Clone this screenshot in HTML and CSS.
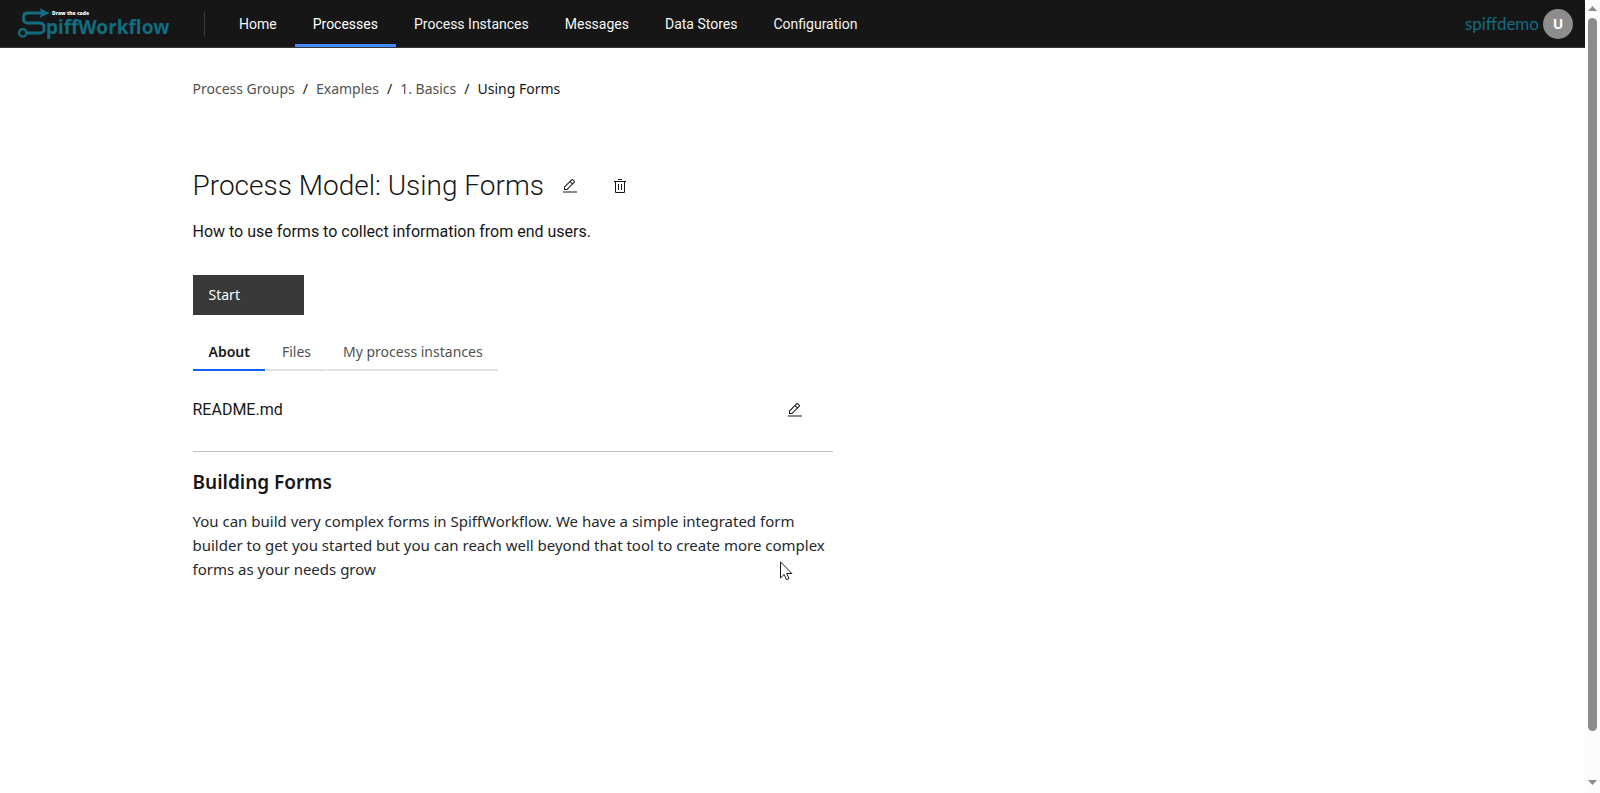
FILE: index.html
```html
<!DOCTYPE html>
<html lang="en">
<head>
<meta charset="utf-8">
<meta name="viewport" content="width=device-width, initial-scale=1">
<title>Using Forms</title>
<link rel="stylesheet" href="styles.css">
</head>
<body>
<div class="app">
  <header class="header">
    <a class="logo" href="#" aria-label="SpiffWorkflow">
      <svg width="176" height="47" viewBox="0 0 176 47" aria-hidden="true">
        <path d="M43 13H28c-3 0-4.500 1.500-4.500 4v2c0 2.500 1.500 4 4.500 4H39.500c3 0 4.500 1.500 4.500 4v2c0 2.500-1.500 4-4.500 4H27" fill="none" stroke="#126d82" stroke-width="2.800"/>
        <path d="M39.500 8 49.500 13 39.500 18 41.500 13Z" fill="#126d82"/>
        <circle cx="22.700" cy="32.800" r="3.700" fill="none" stroke="#126d82" stroke-width="2.300"/>
        <text class="logo-name" x="46" y="34">piffWorkflow</text>
        <text class="logo-tag" x="52" y="15">Draw the code</text>
      </svg>
    </a>
    <nav class="nav" aria-label="Main">
      <a class="nav-link" href="#">Home</a>
      <a class="nav-link nav-link-active" href="#" aria-current="page">Processes</a>
      <a class="nav-link" href="#">Process Instances</a>
      <a class="nav-link" href="#">Messages</a>
      <a class="nav-link" href="#">Data Stores</a>
      <a class="nav-link" href="#">Configuration</a>
    </nav>
    <div class="user">
      <a class="user-name" href="#">spiffdemo</a>
      <button class="avatar" type="button" aria-label="User menu">U</button>
    </div>
  </header>

  <main class="content">
    <nav aria-label="Breadcrumb">
      <ol class="breadcrumb">
        <li><a href="#">Process Groups</a></li>
        <li><a href="#">Examples</a></li>
        <li><a href="#">1. Basics</a></li>
        <li aria-current="page">Using Forms</li>
      </ol>
    </nav>

    <div class="title-row">
      <h1 class="title">Process Model: Using Forms</h1>
      <div class="title-actions">
        <button class="icon-button" type="button" aria-label="Edit process model">
          <svg width="16" height="16" viewBox="0 0 32 32" aria-hidden="true"><path d="M2 27H30V29H2zM25.400 9c.8-.8.8-2 0-2.800l-3.600-3.600c-.8-.8-2-.8-2.800 0l-15 15V24h6.400L25.400 9zM20.400 4 24 7.600l-3 3L17.400 7 20.400 4zM6 22v-3.600l10-10 3.600 3.600-10 10H6z"/></svg>
        </button>
        <button class="icon-button" type="button" aria-label="Delete process model">
          <svg width="16" height="16" viewBox="0 0 32 32" aria-hidden="true"><path d="M12 12H14V24H12zM18 12H20V24H18zM4 6V8H6V28a2 2 0 0 0 2 2H24a2 2 0 0 0 2-2V8h2V6zM8 28V8H24V28zM12 2H20V4H12z"/></svg>
        </button>
      </div>
    </div>
    <p class="description">How to use forms to collect information from end users.</p>
    <button class="start" type="button">Start</button>

    <div class="tabs" role="tablist" aria-label="Process model">
      <button class="tab tab-active" type="button" role="tab" aria-selected="true">About</button>
      <button class="tab" type="button" role="tab" aria-selected="false">Files</button>
      <button class="tab" type="button" role="tab" aria-selected="false">My process instances</button>
    </div>

    <section class="readme">
      <div class="readme-head">
        <span>README.md</span>
        <button class="icon-button" type="button" aria-label="Edit README.md">
          <svg width="16" height="16" viewBox="0 0 32 32" aria-hidden="true"><path d="M2 27H30V29H2zM25.400 9c.8-.8.8-2 0-2.800l-3.600-3.600c-.8-.8-2-.8-2.800 0l-15 15V24h6.400L25.400 9zM20.400 4 24 7.600l-3 3L17.400 7 20.400 4zM6 22v-3.600l10-10 3.600 3.600-10 10H6z"/></svg>
        </button>
      </div>
      <hr class="rule">
      <h2 class="readme-title">Building Forms</h2>
      <p class="readme-text">You can build very complex forms in SpiffWorkflow. We have a simple integrated form builder to get you started but you can reach well beyond that tool to create more complex forms as your needs grow</p>
    </section>
  </main>
</div>

<div class="scrollbar" aria-hidden="true">
  <svg width="9" height="5" viewBox="0 0 9 5"><path d="M4.500 0 9 5H0z"/></svg>
  <div class="track"><div class="thumb"></div></div>
  <svg width="9" height="5" viewBox="0 0 9 5"><path d="M0 0H9L4.500 5z"/></svg>
</div>

<svg class="pointer" width="13" height="20" viewBox="0 0 13 20" aria-hidden="true"><path d="M.5.8V17l3.700-3.500 2.300 5.200 2.500-1.100-2.300-5.100h5.200z" fill="#fff" stroke="#1a1a22"/></svg>
</body>
</html>
```
FILE: styles.css
```css
* { box-sizing: border-box; }

body {
  margin: 0;
  min-height: 100vh;
  display: flex;
  background: #fff;
  color: #161616;
  font: 14px/18px "Noto Sans", sans-serif;
}

a { color: inherit; text-decoration: none; }
button { border: 0; padding: 0; background: none; color: inherit; font: inherit; cursor: pointer; }
svg { display: block; }

.app { flex: 1; min-width: 0; }

.header {
  display: flex;
  align-items: center;
  height: 48px;
  background: #161616;
  border-bottom: 1px solid #393939;
}
.logo-name { font: 700 19px "Noto Sans", sans-serif; fill: #126d82; }
.logo-tag { font: 900 5px "Noto Sans", sans-serif; fill: #fff; }

.nav { display: flex; align-items: center; height: 100%; margin-left: 28px; }
.nav::before { content: ""; width: 1px; height: 24px; margin-right: 16px; background: #393939; }
.nav-link {
  display: flex;
  align-items: center;
  height: 100%;
  padding: 4px 18px 0;
  border-bottom: 3px solid transparent;
  color: #f4f4f4;
  font-family: Roboto, sans-serif;
}
.nav-link-active { border-bottom-color: #4589ff; color: #fff; }

.user { display: flex; align-items: center; gap: 4px; margin-left: auto; padding-right: 12px; }
.user-name { font-family: Lato, sans-serif; font-size: 17px; color: #126d82; }
.avatar { width: 30px; height: 30px; border-radius: 50%; background: #8d8d8d; color: #fff; font-weight: 700; }

.content { max-width: 1200px; margin: 0 auto; padding-top: 32px; }

.breadcrumb { display: flex; margin: 0; padding: 0; list-style: none; line-height: 18px; color: #161616; }
.breadcrumb a { color: #525252; }
.breadcrumb li + li::before { content: "/"; margin: 0 8px; }

.title-row { display: flex; align-items: center; gap: 2px; margin-top: 64px; }
.title { margin: 0; font: 300 28px/48px Roboto, sans-serif; }
.title-actions { display: flex; gap: 2px; }
.icon-button { display: grid; place-items: center; width: 48px; height: 48px; }
.icon-button svg { fill: #161616; }

.description { margin: 10px 0 31px; font: 16px/24px Roboto, sans-serif; }
.start {
  display: block;
  width: 111px;
  height: 40px;
  padding-left: 16px;
  background: #393939;
  color: #fff;
  text-align: left;
}

.tabs { display: flex; gap: 1px; margin-top: 16px; }
.tab { height: 40px; padding: 4px 15px 0 16px; border-bottom: 2px solid #e0e0e0; color: #525252; }
.tab-active { border-bottom-color: #0f62fe; color: #161616; font-weight: 600; }

.readme { max-width: 640px; }
.readme-head {
  display: flex;
  justify-content: space-between;
  align-items: center;
  margin-top: 15px;
  padding-right: 14px;
  font: 16px/24px Roboto, sans-serif;
}
.rule { height: 1px; margin: 17px 0 0; border: 0; background: #c0c0c0; }
.readme-title { margin: 16px 0 13px; font-size: 19px; line-height: 28px; font-weight: 600; }
.readme-text { margin: 0; font-size: 15px; line-height: 24px; color: #24292f; }

.scrollbar {
  position: sticky;
  top: 0;
  display: flex;
  flex-direction: column;
  align-items: center;
  gap: 7px;
  width: 15px;
  height: 100vh;
  padding: 6px 0 8px;
  background: #fcfcfc;
}
.scrollbar svg { flex: none; fill: #8b8b8b; }
.track { flex: 1; width: 9px; }
.thumb { height: 94.500%; border-radius: 5px; background: #8b8b8b; }

.pointer { position: absolute; left: 780px; top: 561px; }
```
